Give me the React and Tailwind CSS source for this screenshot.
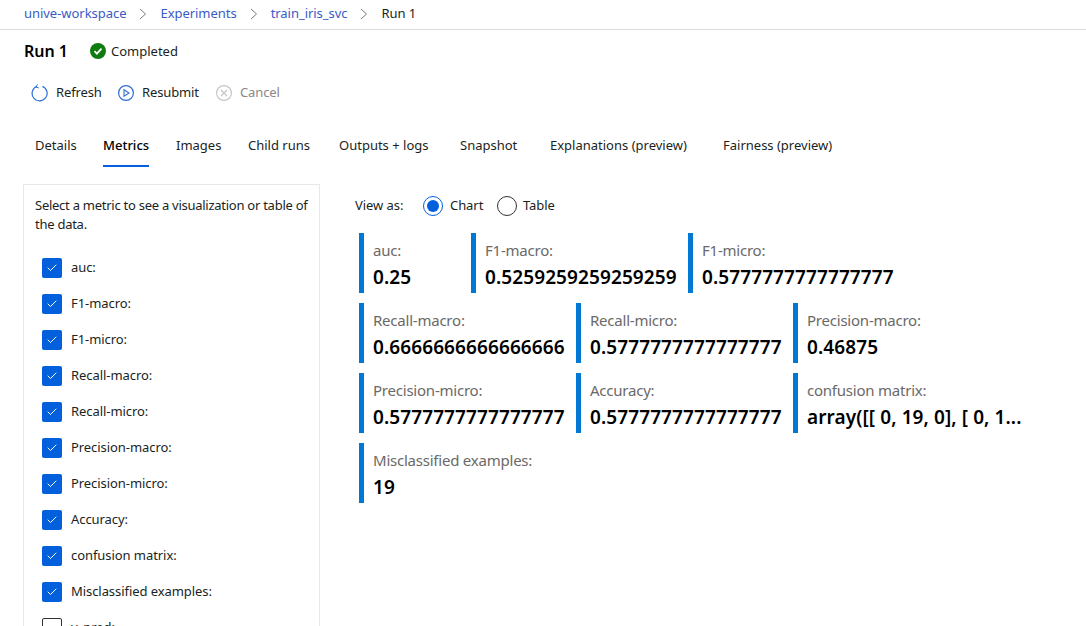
import { Check } from "lucide-react";

const FONT = "font-['Noto_Sans','Open_Sans',sans-serif]";

const crumbs = ["unive-workspace", "Experiments", "train_iris_svc"];

const tabs = [
  { label: "Details", cls: "w-[68px]" },
  { label: "Metrics", cls: "w-[73px]", active: true },
  { label: "Images", cls: "w-[72px]" },
  { label: "Child runs", cls: "w-[91px]" },
  { label: "Outputs + logs", cls: "w-[121px]" },
  { label: "Snapshot", cls: "w-[90px]" },
  { label: "Explanations (preview)", cls: "w-[173px]" },
  { label: "Fairness (preview)", cls: "" },
];

const metrics = [
  "auc:",
  "F1-macro:",
  "F1-micro:",
  "Recall-macro:",
  "Recall-micro:",
  "Precision-macro:",
  "Precision-micro:",
  "Accuracy:",
  "confusion matrix:",
  "Misclassified examples:",
];

const tiles = [
  { label: "auc:", value: "0.25", cls: "w-[102px]" },
  { label: "F1-macro:", value: "0.5259259259259259", cls: "w-[207px]" },
  { label: "F1-micro:", value: "0.5777777777777777", cls: "w-[207px]" },
  { label: "Recall-macro:", value: "0.6666666666666666", cls: "w-[207px]" },
  { label: "Recall-micro:", value: "0.5777777777777777", cls: "w-[207px]" },
  { label: "Precision-macro:", value: "0.46875", cls: "w-[207px]" },
  { label: "Precision-micro:", value: "0.5777777777777777", cls: "w-[207px]" },
  { label: "Accuracy:", value: "0.5777777777777777", cls: "w-[207px]" },
  { label: "confusion matrix:", value: "array([[ 0, 19, 0], [ 0, 1...", cls: "w-[232px]" },
  { label: "Misclassified examples:", value: "19", cls: "w-[207px]" },
];

function Chevron() {
  return (
    <svg width="8" height="12" viewBox="0 0 8 12" className="mx-[13px]">
      <path d="M1 1l5.5 5L1 11" fill="none" stroke="#7a7a7a" strokeWidth="1" />
    </svg>
  );
}

function Box({ checked }) {
  if (!checked) {
    return <div className="w-5 h-5 rounded-[2px] border border-[#323130] bg-white" />;
  }
  return (
    <div className="w-5 h-5 rounded-[2px] bg-[#0360dc] flex items-center justify-center">
      <Check className="w-3 h-3 text-white" strokeWidth={2} />
    </div>
  );
}

function Tile({ label, value, cls }) {
  return (
    <div className={`${cls} h-[60px] border-l-[5px] border-[#0078d4] pl-[9px] pt-[7px] overflow-hidden`}>
      <div className="text-[15px] leading-[20px] text-[#6b6967] tracking-[-0.015em] whitespace-nowrap">{label}</div>
      <div className="text-[19px] leading-[24px] mt-[5px] font-semibold text-black tracking-[0.005em] whitespace-pre">{value}</div>
    </div>
  );
}

export default function App() {
  return (
    <div className={`${FONT} w-[1086px] h-[626px] overflow-hidden bg-white text-[13px] text-[#201f1e]`}>
      <div className="h-[30px] border-b border-[#dcdcdc] flex items-center pl-6 pb-[2px] tracking-[-0.003em]">
        {crumbs.map((c) => (
          <div key={c} className="flex items-center">
            <span className="text-[#3a5bc7]">{c}</span>
            <Chevron />
          </div>
        ))}
        <span>Run 1</span>
      </div>

      <div className="h-[43px] flex items-center pl-6 pb-[1px]">
        <span className="text-[16px] font-semibold text-black w-[66px]">Run 1</span>
        <svg width="16" height="16" viewBox="0 0 16 16">
          <circle cx="8" cy="8" r="8" fill="#107c10" />
          <path d="M4.5 8.2l2.4 2.4 4.6-5" fill="none" stroke="#fff" strokeWidth="1.8" />
        </svg>
        <span className="ml-[5px] mt-[1px]">Completed</span>
      </div>

      <div className="h-[39px] flex items-center pl-[31px] tracking-[-0.01em]">
        <svg width="17" height="18" viewBox="0 0 17 18">
          <path d="M6 2.3A7.5 7.5 0 1 0 11.5 2.4" fill="none" stroke="#2f6fd6" strokeWidth="1.2" />
          <path d="M6.5 0.5L5 3l2.8 1" fill="none" stroke="#2f6fd6" strokeWidth="1" />
        </svg>
        <span className="ml-[8px] w-[62px]">Refresh</span>
        <svg width="16" height="16" viewBox="0 0 16 16">
          <circle cx="8" cy="8" r="7.4" fill="none" stroke="#2f6fd6" strokeWidth="1.2" />
          <path d="M6 4.8L11 8l-5 3.2z" fill="none" stroke="#2f6fd6" strokeWidth="1.1" />
        </svg>
        <span className="ml-[8px] w-[74px]">Resubmit</span>
        <svg width="16" height="16" viewBox="0 0 16 16">
          <circle cx="8" cy="8" r="7.4" fill="none" stroke="#c8c6c4" strokeWidth="1.2" />
          <path d="M5 5l6 6M11 5l-6 6" fill="none" stroke="#c8c6c4" strokeWidth="1.2" />
        </svg>
        <span className="ml-[8px] text-[#8a8886]">Cancel</span>
      </div>

      <div className="mt-[15px] h-[40px] flex pl-[35px]">
        {tabs.map((t) => (
          <div key={t.label} className={t.cls}>
            <div className={`inline-block h-[40px] pt-[9px] whitespace-nowrap ${t.active ? "font-medium text-black border-b-2 border-[#0360dc]" : ""}`}>
              {t.label}
            </div>
          </div>
        ))}
      </div>

      <div className="mt-[17px] flex items-start">
        <div className="ml-[23px] w-[297px] h-[500px] border border-[#e8e8e8] pl-[11px] pr-[10px] pt-[11px] shrink-0">
          <p className="leading-[19px] tracking-[-0.02em]">Select a metric to see a visualization or table of the data.</p>
          <div className="mt-[24px] pl-[7px] flex flex-col gap-4">
            {metrics.map((m) => (
              <div key={m} className="flex items-center gap-[9px] tracking-[-0.005em]">
                <Box checked />
                <span>{m}</span>
              </div>
            ))}
            <div className="flex items-center gap-[9px] tracking-[-0.005em]">
              <Box />
              <span>y_pred:</span>
            </div>
          </div>
        </div>

        <div className="ml-[39px] w-[672px]">
          <div className="h-[41px] pt-[2px] flex items-center -ml-[4px] tracking-[-0.005em]">
            <span className="w-[68px]">View as:</span>
            <div className="w-5 h-5 rounded-full border border-[#0360dc] flex items-center justify-center">
              <div className="w-3 h-3 rounded-full bg-[#0360dc]" />
            </div>
            <span className="ml-[7px] w-[47px]">Chart</span>
            <div className="w-5 h-5 rounded-full border border-[#323130]" />
            <span className="ml-[6px]">Table</span>
          </div>
          <div className="mt-[8px] flex flex-wrap gap-x-[10px] gap-y-[10px]">
            {tiles.map((t) => (
              <Tile key={t.label} {...t} />
            ))}
          </div>
        </div>
      </div>
    </div>
  );
}
